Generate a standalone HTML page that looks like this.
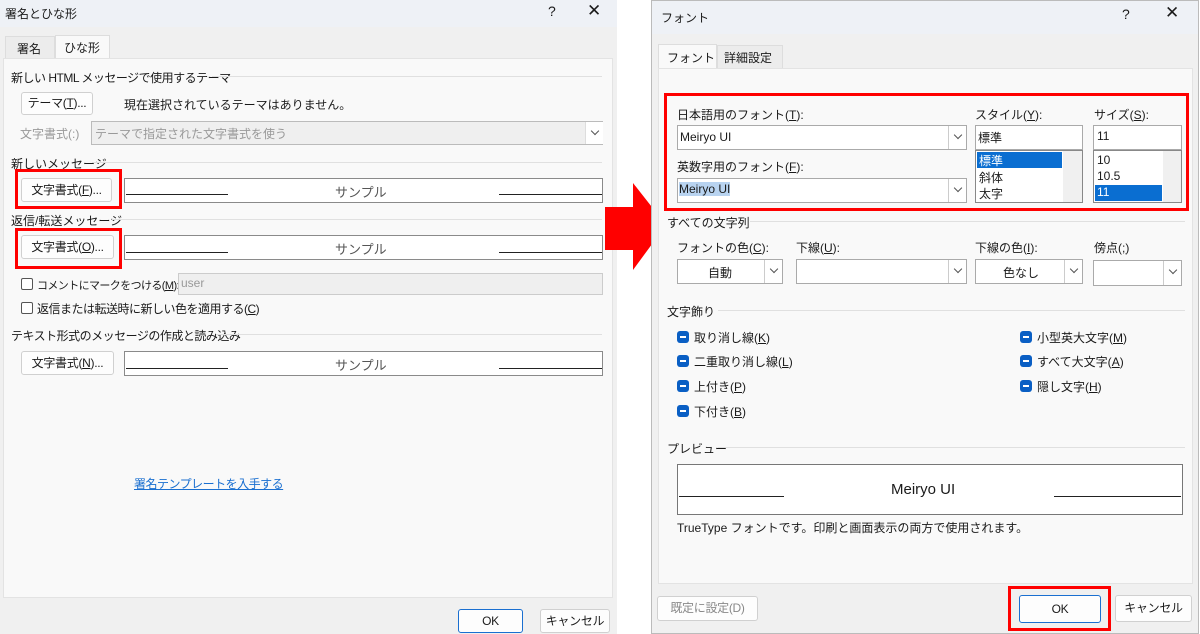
<!DOCTYPE html><html><head><meta charset="utf-8"><style>
*{box-sizing:border-box;margin:0;padding:0}
body{width:1200px;height:634px;position:relative;background:#fff;font-family:"Liberation Sans","Noto Sans CJK JP",sans-serif;font-size:12px;color:#1a1a1a;overflow:hidden}
.a{position:absolute;white-space:nowrap}
.btn{position:absolute;background:#fdfdfd;border:1px solid #d0d0d0;border-radius:3px;text-align:center;white-space:nowrap;letter-spacing:-0.3px}
.box{position:absolute;background:#fff;border:1px solid #8a8a8a}
.red{position:absolute;border:3px solid #f00}
.hr{position:absolute;height:1px;background:#e0e0e0}
.chk{position:absolute;width:12px;height:12px;background:#0a5fc4;border-radius:3px}
.chk:after{content:"";position:absolute;left:3px;top:5px;width:6px;height:2px;background:#fff}
.cb{position:absolute;width:12px;height:12px;border:1px solid #555;border-radius:2px;background:#fff}
.dd{position:absolute;background:#fff;border:1px solid #aaa}
.dd i{position:absolute;right:0;top:0;bottom:0;width:18px;border-left:1px solid #ccc}
.dd i:after{content:"";position:absolute;left:6px;top:6px;width:5px;height:5px;border-right:1px solid #555;border-bottom:1px solid #555;transform:rotate(45deg)}
.ln{position:absolute;height:1px;background:#222}
</style></head><body>
<div class="a" style="left:0;top:0;width:617px;height:634px;background:#f0f0f0"></div>
<div class="a" style="left:0;top:0;width:617px;height:27px;background:#eef1f6"></div>
<div class="a" style="left:5px;top:5px;font-size:12px">署名とひな形</div>
<div class="a" style="left:548px;top:3px;font-size:14px">?</div>
<div class="a" style="left:587px;top:1px;font-size:17px">✕</div>
<div class="a" style="left:5px;top:36px;width:50px;height:23px;background:#ececec;border:1px solid #ddd"></div>
<div class="a" style="left:17px;top:40px">署名</div>
<div class="a" style="left:55px;top:35px;width:55px;height:24px;background:#f9f9f9;border:1px solid #ddd;border-bottom:none"></div>
<div class="a" style="left:64px;top:39px">ひな形</div>
<div class="a" style="left:3px;top:58px;width:610px;height:540px;background:#f9f9f9;border:1px solid #e3e3e3"></div>
<div class="a" style="left:11px;top:69px;letter-spacing:-0.5px">新しい HTML メッセージで使用するテーマ</div><div class="hr" style="left:212px;top:76px;width:390px"></div>
<div class="btn" style="left:21px;top:92px;width:72px;height:23px;line-height:21px">テーマ(<u>T</u>)...</div>
<div class="a" style="left:124px;top:96px">現在選択されているテーマはありません。</div>
<div class="a" style="left:20px;top:125px;color:#999">文字書式(:)</div>
<div class="a" style="left:91px;top:121px;width:512px;height:24px;background:#efefef;border:1px solid #bbb"></div>
<div class="a" style="left:95px;top:125px;color:#999">テーマで指定された文字書式を使う</div>
<div class="dd" style="left:585px;top:122px;width:18px;height:22px;background:#fff;border:none"><i style="border-left:1px solid #ddd"></i></div>
<div class="a" style="left:11px;top:155px">新しいメッセージ</div><div class="hr" style="left:92px;top:162px;width:510px"></div>
<div class="btn" style="left:21px;top:178px;width:91px;height:24px;line-height:22px">文字書式(<u>F</u>)...</div>
<div class="red" style="left:15px;top:169px;width:107px;height:40px"></div>
<div class="box" style="left:124px;top:178px;width:479px;height:25px"></div>
<div class="a" style="left:335px;top:182px;color:#555;font-size:13px">サンプル</div>
<div class="ln" style="left:126px;top:194px;width:102px"></div><div class="ln" style="left:499px;top:194px;width:103px"></div>
<div class="a" style="left:11px;top:212px">返信/転送メッセージ</div><div class="hr" style="left:112px;top:219px;width:490px"></div>
<div class="btn" style="left:21px;top:235px;width:93px;height:24px;line-height:22px">文字書式(<u>O</u>)...</div>
<div class="red" style="left:15px;top:228px;width:107px;height:41px"></div>
<div class="box" style="left:124px;top:235px;width:479px;height:25px"></div>
<div class="a" style="left:335px;top:239px;color:#555;font-size:13px">サンプル</div>
<div class="ln" style="left:126px;top:252px;width:102px"></div><div class="ln" style="left:499px;top:252px;width:103px"></div>
<div class="cb" style="left:21px;top:278px"></div><div class="a" style="left:37px;top:277px;font-size:11px;letter-spacing:-0.6px">コメントにマークをつける(<u>M</u>):</div>
<div class="a" style="left:178px;top:273px;width:425px;height:22px;background:#efefef;border:1px solid #ccc"></div><div class="a" style="left:181px;top:276px;color:#999">user</div>
<div class="cb" style="left:21px;top:302px"></div><div class="a" style="left:37px;top:300px;letter-spacing:-0.5px">返信または転送時に新しい色を適用する(<u>C</u>)</div>
<div class="a" style="left:11px;top:327px;letter-spacing:-0.5px">テキスト形式のメッセージの作成と読み込み</div><div class="hr" style="left:216px;top:334px;width:386px"></div>
<div class="btn" style="left:21px;top:351px;width:93px;height:24px;line-height:22px">文字書式(<u>N</u>)...</div>
<div class="box" style="left:124px;top:351px;width:479px;height:25px"></div>
<div class="a" style="left:335px;top:355px;color:#555;font-size:13px">サンプル</div>
<div class="ln" style="left:126px;top:368px;width:102px"></div><div class="ln" style="left:499px;top:368px;width:103px"></div>
<div class="a" style="left:134px;top:475px;color:#1a6fd0;text-decoration:underline;letter-spacing:-0.5px">署名テンプレートを入手する</div>
<div class="btn" style="left:458px;top:609px;width:65px;height:24px;line-height:22px;border:1px solid #1a6fd0">OK</div>
<div class="btn" style="left:540px;top:609px;width:70px;height:24px;line-height:22px">キャンセル</div>
<svg class="a" style="left:600px;top:180px" width="70" height="95"><polygon points="5,27 33,27 33,3 66,45 33,90 33,70 5,70" fill="#f00"/></svg>
<div class="a" style="left:651px;top:0;width:548px;height:634px;background:#f0f0f0;border:1px solid #bbb"></div>
<div class="a" style="left:652px;top:1px;width:546px;height:33px;background:#eef1f6"></div>
<div class="a" style="left:661px;top:9px">フォント</div>
<div class="a" style="left:1122px;top:6px;font-size:14px">?</div>
<div class="a" style="left:1165px;top:3px;font-size:17px">✕</div>
<div class="a" style="left:658px;top:44px;width:59px;height:25px;background:#f9f9f9;border:1px solid #ddd;border-bottom:none"></div>
<div class="a" style="left:667px;top:49px">フォント</div>
<div class="a" style="left:717px;top:45px;width:66px;height:24px;background:#ececec;border:1px solid #ddd"></div>
<div class="a" style="left:724px;top:49px">詳細設定</div>
<div class="a" style="left:658px;top:68px;width:535px;height:516px;background:#f9f9f9;border:1px solid #e3e3e3"></div>
<div class="red" style="left:664px;top:93px;width:525px;height:118px"></div>
<div class="a" style="left:677px;top:106px">日本語用のフォント(<u>T</u>):</div>
<div class="dd" style="left:677px;top:125px;width:290px;height:25px"><i></i></div><div class="a" style="left:680px;top:130px">Meiryo UI</div>
<div class="a" style="left:677px;top:158px">英数字用のフォント(<u>F</u>):</div>
<div class="dd" style="left:677px;top:178px;width:290px;height:25px"><i></i></div><div class="a" style="left:679px;top:182px;background:#b8d3f0">Meiryo UI</div>
<div class="a" style="left:975px;top:106px">スタイル(<u>Y</u>):</div>
<div class="box" style="left:975px;top:125px;width:108px;height:25px;border-color:#aaa"></div><div class="a" style="left:978px;top:129px">標準</div>
<div class="box" style="left:975px;top:150px;width:108px;height:53px;border-color:#888"></div>
<div class="a" style="left:1063px;top:151px;width:19px;height:51px;background:#f0f0f0"></div>
<div class="a" style="left:977px;top:152px;width:85px;height:16px;background:#0a6ed1;color:#fff;padding-left:2px">標準</div>
<div class="a" style="left:979px;top:169px">斜体</div><div class="a" style="left:979px;top:185px">太字</div>
<div class="a" style="left:1094px;top:106px">サイズ(<u>S</u>):</div>
<div class="box" style="left:1093px;top:125px;width:89px;height:25px;border-color:#aaa"></div><div class="a" style="left:1097px;top:129px">11</div>
<div class="box" style="left:1093px;top:150px;width:89px;height:53px;border-color:#888"></div>
<div class="a" style="left:1163px;top:151px;width:18px;height:51px;background:#f0f0f0"></div>
<div class="a" style="left:1097px;top:153px">10</div><div class="a" style="left:1097px;top:169px">10.5</div>
<div class="a" style="left:1095px;top:185px;width:67px;height:16px;background:#0a6ed1;color:#fff;padding-left:2px">11</div>
<div class="a" style="left:667px;top:214px">すべての文字列</div><div class="hr" style="left:750px;top:221px;width:435px"></div>
<div class="a" style="left:677px;top:239px">フォントの色(<u>C</u>):</div>
<div class="dd" style="left:677px;top:259px;width:106px;height:25px"><i></i></div><div class="a" style="left:708px;top:264px">自動</div>
<div class="a" style="left:796px;top:239px">下線(<u>U</u>):</div>
<div class="dd" style="left:796px;top:259px;width:171px;height:25px"><i></i></div>
<div class="a" style="left:975px;top:239px">下線の色(<u>I</u>):</div>
<div class="dd" style="left:975px;top:259px;width:108px;height:25px"><i></i></div><div class="a" style="left:1003px;top:264px">色なし</div>
<div class="a" style="left:1094px;top:239px">傍点(<u>;</u>)</div>
<div class="dd" style="left:1093px;top:260px;width:89px;height:26px"><i></i></div>
<div class="a" style="left:667px;top:303px">文字飾り</div><div class="hr" style="left:718px;top:310px;width:467px"></div>
<div class="chk" style="left:677px;top:331px"></div><div class="a" style="left:694px;top:329px">取り消し線(<u>K</u>)</div>
<div class="chk" style="left:677px;top:355px"></div><div class="a" style="left:694px;top:353px">二重取り消し線(<u>L</u>)</div>
<div class="chk" style="left:677px;top:380px"></div><div class="a" style="left:694px;top:378px">上付き(<u>P</u>)</div>
<div class="chk" style="left:677px;top:405px"></div><div class="a" style="left:694px;top:403px">下付き(<u>B</u>)</div>
<div class="chk" style="left:1020px;top:331px"></div><div class="a" style="left:1037px;top:329px">小型英大文字(<u>M</u>)</div>
<div class="chk" style="left:1020px;top:355px"></div><div class="a" style="left:1037px;top:353px">すべて大文字(<u>A</u>)</div>
<div class="chk" style="left:1020px;top:380px"></div><div class="a" style="left:1037px;top:378px">隠し文字(<u>H</u>)</div>
<div class="a" style="left:667px;top:440px">プレビュー</div><div class="hr" style="left:718px;top:447px;width:467px"></div>
<div class="box" style="left:677px;top:464px;width:506px;height:51px;border-color:#777"></div>
<div class="a" style="left:891px;top:481px;font-size:15px">Meiryo UI</div>
<div class="ln" style="left:679px;top:496px;width:105px"></div><div class="ln" style="left:1054px;top:496px;width:127px"></div>
<div class="a" style="left:677px;top:519px">TrueType フォントです。印刷と画面表示の両方で使用されます。</div>
<div class="btn" style="left:657px;top:596px;width:101px;height:25px;line-height:23px;color:#888">既定に設定(D)</div>
<div class="red" style="left:1008px;top:586px;width:103px;height:45px"></div>
<div class="btn" style="left:1019px;top:595px;width:82px;height:28px;line-height:26px;border:1px solid #1a6fd0">OK</div>
<div class="btn" style="left:1115px;top:595px;width:77px;height:27px;line-height:25px">キャンセル</div>
</body></html>
